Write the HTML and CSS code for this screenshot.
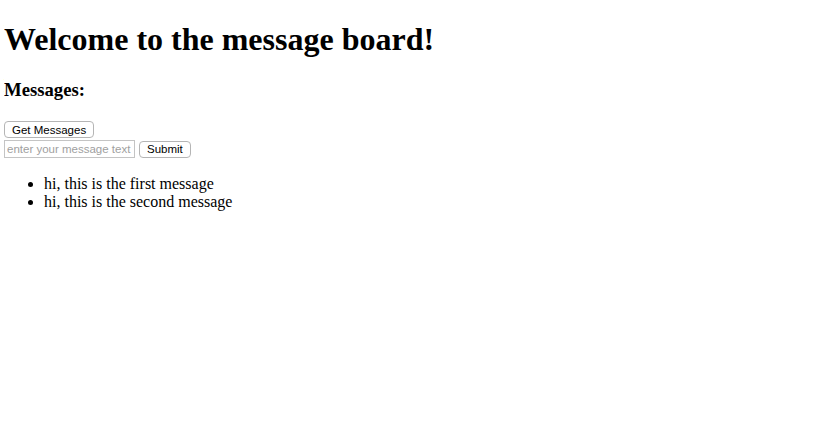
FILE: index.html
```html
<!DOCTYPE html>
<html>
<head>
<meta charset="utf-8">
<link rel="stylesheet" href="styles.css">
</head>
<body>
<h1 class="title">Welcome to the message board!</h1>
<h3 class="subtitle">Messages:</h3>
<div class="controls">
  <div class="row"><button class="btn">Get Messages</button></div>
  <div class="row"><input class="field" type="text" placeholder="enter your message text"><button class="btn">Submit</button></div>
</div>
<ul class="messages">
  <li>hi, this is the first message</li>
  <li>hi, this is the second message</li>
</ul>
</body>
</html>
```
FILE: styles.css
```css
body {
  margin: 4px;
  font-family: "Liberation Serif", serif;
  font-size: 16px;
  color: #000;
  background: #fff;
}
.title {
  font-size: 32px;
  margin: 17px 0 21px;
}
.subtitle {
  font-size: 18.72px;
  margin: 18px 0 20px;
}
.controls {
  display: flex;
  flex-direction: column;
  gap: 2px;
}
.row {
  display: flex;
  align-items: center;
  gap: 4px;
}
.btn {
  font-family: "Liberation Sans", sans-serif;
  font-size: 11.5px;
  height: 17px;
  padding: 0 7px;
  background: #fff;
  border: 1px solid #b5b5b5;
  border-radius: 4px;
  color: #000;
}
.field {
  font-family: "Liberation Sans", sans-serif;
  font-size: 11.5px;
  width: 131px;
  height: 18px;
  box-sizing: border-box;
  padding: 0 2px;
  border: 1px solid #c4c4c4;
  margin: 0;
}
.field::placeholder {
  color: #a0a0a0;
}
.messages {
  margin: 17px 0 16px;
  padding-left: 40px;
}
```
